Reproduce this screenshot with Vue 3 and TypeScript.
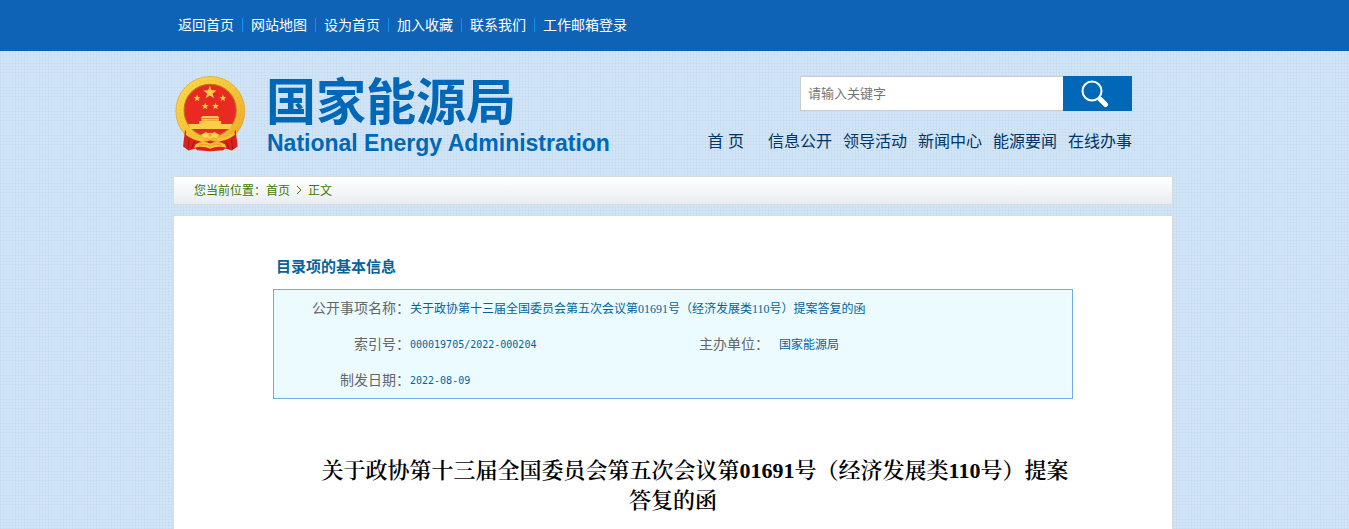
<script setup lang="ts">
import { ref } from 'vue'

const topLinks: string[] = ['返回首页', '网站地图', '设为首页', '加入收藏', '联系我们', '工作邮箱登录']
const mainNav: string[] = ['首 页', '信息公开', '领导活动', '新闻中心', '能源要闻', '在线办事']
const keyword = ref('')
</script>

<template>
  <div class="page">
    <div class="topbar">
      <nav class="wrap top-links" aria-label="快捷链接">
        <a v-for="item in topLinks" :key="item" href="#">{{ item }}</a>
      </nav>
    </div>

    <header class="wrap header">
      <a class="brand" href="#" aria-label="国家能源局">
        <svg class="emblem" viewBox="30 34 212 224" aria-hidden="true">
          <defs>
            <linearGradient id="gold" x1="0" y1="0" x2="1" y2="1">
              <stop offset="0" stop-color="#ffdc4a" />
              <stop offset="0.5" stop-color="#f6c436" />
              <stop offset="1" stop-color="#eba826" />
            </linearGradient>
            <path id="star" d="M0-10 2.4-3.2 9.5-3.1 3.8 1.2 5.9 8.1 0 4-5.9 8.1-3.8 1.2-9.5-3.1-2.4-3.2Z" />
          </defs>
          <circle cx="135.500" cy="137" r="103" fill="url(#gold)" stroke="#dd9c22" stroke-width="2" />
          <circle cx="135" cy="137" r="91" fill="none" stroke="#d99a22" stroke-width="5" stroke-dasharray="3 9" opacity="0.35" />
          <circle cx="135" cy="135" r="78" fill="#e92a22" stroke="#b87a16" stroke-width="3" />
          <g fill="#f9cf48">
            <use href="#star" transform="translate(134 82) scale(2.1)" />
            <use href="#star" transform="translate(96 99) scale(1.1)" />
            <use href="#star" transform="translate(173 99) scale(1.1)" />
            <use href="#star" transform="translate(120 123) scale(1.1)" />
            <use href="#star" transform="translate(151 123) scale(1.1)" />
            <path d="M112 152h46l5 7h-56zM109 160h52v6h-52zM102 167h66v9h-66zM69 176h132l-6 15H76z" />
          </g>
          <path d="M60 193 54 243 70 255 92 249 96 254 135 257 174 254 180 249 200 255 217 243 211 193Q202 213 181 221L158 231 135 225 112 231 90 221Q68 213 60 193Z" fill="#dc221d" />
          <path d="M72 222 69 251M88 229 79 250M183 229 191 250M199 222 202 251" stroke="#a81414" stroke-width="3" fill="none" />
          <path d="M64 198Q90 222 118 216L114 226Q88 229 62 208ZM207 198Q181 222 153 216L157 226Q183 229 209 208Z" fill="#f6c436" />
          <path d="M108 208 122 200 128 203 142 203 148 200 162 208 153 220 145 217 135 221 125 217 117 220Z" fill="#fbd551" stroke="#d58c1b" />
          <circle cx="135" cy="209" r="5" fill="#e5a629" />
          <path d="M92 236Q112 225 135 234 159 225 179 236L184 247Q157 239 135 250 112 239 87 247Z" fill="#f6c436" />
          <path d="M101 240Q119 232 135 242 152 232 170 240" fill="none" stroke="#d58c1b" stroke-width="2" />
        </svg>
        <span class="brand-text">
          <span class="brand-cn">国家能源局</span>
          <span class="brand-en">National Energy Administration</span>
        </span>
      </a>

      <div class="tools">
        <form class="search" role="search" @submit.prevent>
          <input v-model="keyword" type="text" placeholder="请输入关键字" aria-label="请输入关键字" />
          <button type="submit" aria-label="搜索">
            <svg viewBox="0 0 28 28" aria-hidden="true">
              <circle cx="11" cy="11" r="9.500" fill="none" stroke="#fff" stroke-width="2" />
              <path d="M17.500 17.500 19.500 19.500" stroke="#fff" stroke-width="2" />
              <path d="M19.500 19.500 24.500 24.500" stroke="#fff" stroke-width="5" stroke-linecap="round" />
            </svg>
          </button>
        </form>
        <nav class="main-nav" aria-label="主导航">
          <a v-for="item in mainNav" :key="item" href="#">{{ item }}</a>
        </nav>
      </div>
    </header>

    <nav class="wrap crumbs" aria-label="当前位置">
      <span>您当前位置：</span><a href="#">首页</a>
      <svg viewBox="0 0 6 10" aria-hidden="true"><path d="M1 1 5 5 1 9" fill="none" stroke="currentColor" /></svg>
      <a href="#">正文</a>
    </nav>

    <main class="wrap article">
      <h2>目录项的基本信息</h2>
      <table class="info">
        <colgroup><col class="c1" /><col class="c2" /><col class="c3" /><col /></colgroup>
        <tbody>
          <tr>
            <th scope="row">公开事项名称：</th>
            <td colspan="3">关于政协第十三届全国委员会第五次会议第01691号（经济发展类110号）提案答复的函</td>
          </tr>
          <tr>
            <th scope="row">索引号：</th>
            <td class="num">000019705/2022-000204</td>
            <th scope="row">主办单位：</th>
            <td class="office">国家能源局</td>
          </tr>
          <tr>
            <th scope="row">制发日期：</th>
            <td class="num" colspan="3">2022-08-09</td>
          </tr>
        </tbody>
      </table>
      <h1>关于政协第十三届全国委员会第五次会议第01691号（经济发展类110号）提案答复的函</h1>
    </main>
  </div>
</template>

<style>
body {
  margin: 0;
  background-color: #d3e6f7;
  background-image:
    repeating-linear-gradient(0deg, rgba(160, 192, 222, 0.16) 0 1px, transparent 1px 3px),
    repeating-linear-gradient(90deg, rgba(160, 192, 222, 0.16) 0 1px, transparent 1px 3px);
}
</style>

<style scoped>
.page {
  padding-right: 3px;
  font-family: "Liberation Sans", "Noto Sans CJK SC", sans-serif;
  font-size: 12px;
}
a {
  color: inherit;
  text-decoration: none;
}
.wrap {
  box-sizing: border-box;
  width: 1000px;
  max-width: 100%;
  margin: 0 auto;
}
.topbar {
  margin-right: -3px;
  padding-right: 3px;
  background: #0e63b6;
}
.top-links {
  display: flex;
  align-items: center;
  height: 51px;
  padding: 0 0 2px 5px;
  font-size: 14px;
  line-height: 14px;
  color: #fff;
}
.top-links a + a {
  margin-left: 8px;
  padding-left: 8px;
  border-left: 1px solid #0d93f2;
}
.header {
  display: flex;
  justify-content: space-between;
  height: 125px;
  padding: 25px 41px 0 2px;
}
.brand {
  display: flex;
  color: #0068b7;
}
.emblem {
  width: 71px;
  height: 76px;
}
.brand-text {
  display: flex;
  flex-direction: column;
  padding-left: 20px;
}
.brand-cn {
  font-size: 50px;
  line-height: 54px;
  font-weight: 700;
}
.brand-en {
  padding-left: 1px;
  font-size: 23px;
  line-height: 26px;
  font-weight: 700;
  white-space: nowrap;
}
.tools {
  display: flex;
  flex-direction: column;
  align-items: flex-end;
}
.search {
  display: flex;
  width: 332px;
  height: 35px;
}
.search input {
  box-sizing: border-box;
  flex: 1;
  min-width: 0;
  padding: 0 7px;
  border: 1px solid #ccc;
  border-right: 0;
  border-radius: 0;
  background: #fff;
  font-family: inherit;
  font-size: 13px;
  color: #333;
}
.search input::placeholder {
  color: #757575;
}
.search button {
  display: flex;
  align-items: center;
  justify-content: center;
  width: 69px;
  padding: 0 5px 0 0;
  border: 0;
  background: #0068b7;
}
.search svg {
  width: 28px;
  height: 28px;
}
.main-nav {
  display: flex;
  gap: 11px;
  margin-top: 19px;
  font-size: 16px;
  line-height: 24px;
  color: #003567;
}
.main-nav a:first-child {
  margin-right: 13px;
}
.crumbs {
  display: flex;
  align-items: center;
  height: 29px;
  padding: 0 0 2px 20px;
  border: 1px solid #d9dcdf;
  background: linear-gradient(#fff, #e9edf0);
  color: #3f7a00;
}
.crumbs svg {
  width: 6px;
  height: 10px;
  margin: 0 6px;
}
.article {
  min-height: 314px;
  margin-top: 10px;
  padding: 40px 99px 0;
  border: 1px solid #d9dcdf;
  border-bottom: 0;
  background: #fff;
}
h2 {
  margin: 0 0 11px;
  padding-left: 3px;
  font-size: 15px;
  line-height: 22px;
  color: #05639b;
}
.info {
  width: 100%;
  border: 1px solid #6daee8;
  border-spacing: 0;
  table-layout: fixed;
  background: #ecfbff;
}
.c1 { width: 136px; }
.c2 { width: 287px; }
.c3 { width: 72px; }
.info th,
.info td {
  height: 36px;
  padding: 0;
  white-space: nowrap;
}
.info th {
  padding-bottom: 2px;
  height: 34px;
  font-size: 14px;
  font-weight: 400;
  text-align: right;
  color: #666;
}
.info td {
  font-family: "Liberation Serif", "Noto Sans CJK SC", serif;
  color: #05639b;
}
.info .num {
  font-family: "DejaVu Sans Mono", monospace;
  font-size: 10px;
}
.info .office {
  padding-left: 10px;
}
h1 {
  margin: 57px 0 0;
  font-family: "Liberation Serif", "Noto Serif CJK SC", "Noto Sans CJK SC", serif;
  font-size: 22px;
  line-height: 30px;
  font-weight: 600;
  text-align: center;
  text-indent: 2em;
  color: #000;
}
</style>
